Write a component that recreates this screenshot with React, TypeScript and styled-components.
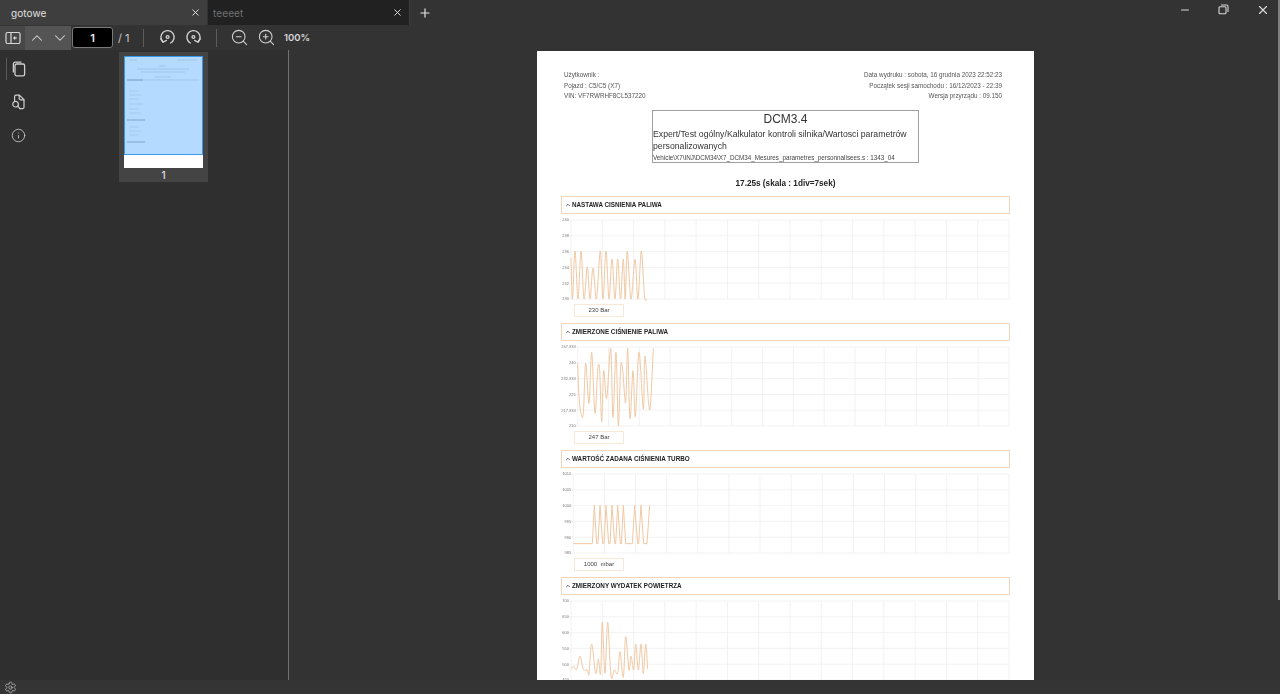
import React from "react"
import styled, { createGlobalStyle } from "styled-components"
import { ChevronDown, ChevronUp, Info, Minus, Plus, Settings, X, ZoomIn, ZoomOut } from "lucide-react"

const GlobalStyle = createGlobalStyle`
  html, body {
    margin: 0;
    padding: 0;
    background: #333333;
    overflow: hidden;
  }
  * {
    box-sizing: border-box;
  }
`

const Shell = styled.div`
  position: relative;
  width: 1280px;
  height: 694px;
  display: flex;
  flex-direction: column;
  background: #333333;
  color: #e4e4e4;
  font-family: Inter, "Liberation Sans", sans-serif;
  overflow: hidden;
`

const ScrollThumb = styled.div`
  position: absolute;
  top: 0;
  right: 0;
  width: 2px;
  height: 600px;
  background: #7e7e7e;
`

const TabBar = styled.div`
  height: 25px;
  display: flex;
  align-items: stretch;
  flex-shrink: 0;
`

const Tab = styled.div<{ $active?: boolean }>`
  width: ${(p) => (p.$active ? "207px" : "201px")};
  margin-right: ${(p) => (p.$active ? "1px" : "0")};
  padding: 0 6px 0 ${(p) => (p.$active ? "11px" : "5px")};
  display: flex;
  align-items: center;
  justify-content: space-between;
  background: ${(p) => (p.$active ? "#3e3e3e" : "#212121")};
  color: ${(p) => (p.$active ? "#e0e0e0" : "#707070")};
  font-size: 10px;
  letter-spacing: 0.1px;
`

const TabClose = styled(X)`
  width: 11px;
  height: 11px;
  color: #e8e8e8;
`

const NewTab = styled.div`
  width: 30px;
  display: flex;
  align-items: center;
  justify-content: center;
  border-left: 1px solid #3e3e3e;
  color: #e8e8e8;
`

const WindowControls = styled.div`
  margin-left: auto;
  margin-right: -2px;
  display: flex;
  align-items: center;
  height: 19px;
`

const WindowButton = styled.div`
  width: 39px;
  display: flex;
  justify-content: center;
  color: #d8d8d8;
`

const Toolbar = styled.div`
  height: 25px;
  display: flex;
  align-items: center;
  flex-shrink: 0;
  color: #d4d4d4;
`

const ToolSquare = styled.div<{ $tone?: string; $w?: number }>`
  width: ${(p) => p.$w ?? 23}px;
  height: 24px;
  display: flex;
  align-items: center;
  justify-content: center;
  background: ${(p) => p.$tone ?? "#545454"};
  color: #d8d8d8;
`

const PageInput = styled.div`
  width: 41px;
  height: 21px;
  margin-left: 1px;
  display: flex;
  align-items: center;
  justify-content: center;
  background: #000000;
  border: 1px solid #7a7a7a;
  border-radius: 3px;
  color: #ededed;
  font-size: 11px;
  font-weight: 600;
`

const PageTotal = styled.span`
  margin-left: 5px;
  width: 25px;
  font-size: 11px;
  color: #c8c8c8;
`

const Divider = styled.span`
  width: 1px;
  height: 18px;
  background: #5c5c5c;
`

const ToolGroup = styled.div<{ $left: number; $right: number; $gap: number }>`
  padding: 0 ${(p) => p.$right}px 0 ${(p) => p.$left}px;
  display: flex;
  align-items: center;
  gap: ${(p) => p.$gap}px;
  color: #d4d4d4;
`

const ZoomLabel = styled.span`
  font-size: 9.5px;
  font-weight: 600;
  color: #d8d8d8;
`

const Body = styled.div`
  flex: 1;
  min-height: 0;
  display: flex;
`

const Sidebar = styled.aside`
  width: 289px;
  flex-shrink: 0;
  display: flex;
  background: #2f2f2f;
  border-right: 1px solid #707070;
`

const Rail = styled.div`
  width: 37px;
  padding-top: 10px;
  display: flex;
  flex-direction: column;
  align-items: center;
  gap: 15px;
  color: #cfcfcf;
`

const RailButton = styled.div`
  position: relative;
  width: 37px;
  height: 18px;
  display: flex;
  align-items: center;
  justify-content: center;
`

const RailMark = styled.span`
  position: absolute;
  top: -2px;
  left: 6px;
  width: 1px;
  height: 22px;
  background: #5a5a5a;
`

const ThumbPane = styled.div`
  flex: 1;
  padding: 2px 80px 0 82px;
`

const ThumbCard = styled.div`
  height: 130px;
  padding: 4px 5px 0;
  display: flex;
  flex-direction: column;
  align-items: center;
  background: #444444;
`

const ThumbPage = styled.div`
  width: 79px;
  height: 112px;
  display: flex;
  flex-direction: column;
  background: #ffffff;
`

const ThumbSelection = styled.div`
  height: 99px;
  background: #b4dbff;
  border: 1.5px solid #3a98ea;
`

const ThumbNumber = styled.span`
  margin-top: 1px;
  font-size: 10px;
  font-weight: 500;
  line-height: 12px;
  color: #e0e0e0;
`

const Viewer = styled.main`
  flex: 1;
  min-width: 0;
  display: flex;
  justify-content: center;
  padding: 1px 0 0 2px;
  overflow: hidden;
  background: #333333;
`

const Sheet = styled.div`
  width: 497px;
  height: 760px;
  flex-shrink: 0;
  padding: 19px 24px 0;
  background: #ffffff;
  color: #2a2a2a;
  font-family: "Liberation Sans", Arial, sans-serif;
  filter: blur(0.3px);
`

const MetaRow = styled.div`
  display: flex;
  justify-content: space-between;
  padding: 0 8px 0 3px;
  font-size: 6.3px;
  line-height: 10.5px;
  color: #555555;
`

const MetaRight = styled.div`
  text-align: right;
`

const TitleBox = styled.div`
  width: 267px;
  height: 53px;
  margin: 8px auto 0;
  padding: 1px 0 0;
  border: 1px solid #a0a0a0;
  color: #333333;
`

const TitleMain = styled.div`
  font-size: 12px;
  line-height: 14px;
  text-align: center;
`

const TitlePath = styled.div`
  margin-top: 2px;
  font-size: 8.7px;
  line-height: 12px;
`

const TitleFile = styled.div`
  margin-top: 1px;
  font-size: 6.3px;
  line-height: 10px;
  white-space: nowrap;
  color: #444444;
`

const Duration = styled.div`
  margin: 15px 0 7px;
  font-size: 8.2px;
  font-weight: 700;
  line-height: 11px;
  text-align: center;
  color: #222222;
`

const Section = styled.section`
  margin-bottom: 6px;
`

const SectionHead = styled.div`
  height: 18px;
  padding-left: 3px;
  display: flex;
  align-items: center;
  gap: 1px;
  border: 1px solid #f0d6bd;
  font-size: 6.3px;
  font-weight: 700;
  color: #1e1e1e;
`

const Caret = styled(ChevronUp)`
  width: 6px;
  height: 6px;
  color: #333333;
`

const ChartSvg = styled.svg`
  display: block;
  margin-top: 4px;
`

const ValueBox = styled.div`
  width: 50px;
  height: 13px;
  margin: 2px 0 0 13px;
  display: flex;
  align-items: center;
  justify-content: center;
  border: 1px solid #f8e8d8;
  font-size: 6px;
  white-space: pre;
  color: #444444;
`

const Footer = styled.div`
  height: 14px;
  flex-shrink: 0;
  padding-left: 4px;
  display: flex;
  align-items: center;
  color: #c4c4c4;
  background: #343434;
`

type Pt = [number, number]

type Chart = {
  title: string
  value: string
  left: number
  labels: string[]
  points: Pt[]
  sharp?: boolean
}

// rows of the grid inside the 84px high chart
const ROWS = [2, 17.8, 33.6, 49.4, 65.2, 81]

// catmull-rom through the samples, the report draws soft curves
const toPath = (pts: Pt[], sharp?: boolean) => {
  if (sharp) return "M" + pts.map((p) => p.join(" ")).join("L")
  let d = `M${pts[0][0]} ${pts[0][1]}`
  for (let i = 0; i < pts.length - 1; i++) {
    const a = pts[Math.max(i - 1, 0)]
    const b = pts[i]
    const c = pts[i + 1]
    const e = pts[Math.min(i + 2, pts.length - 1)]
    const c1x = b[0] + (c[0] - a[0]) / 6
    const c1y = b[1] + (c[1] - a[1]) / 6
    const c2x = c[0] - (e[0] - b[0]) / 6
    const c2y = c[1] - (e[1] - b[1]) / 6
    d += `C${c1x} ${c1y} ${c2x} ${c2y} ${c[0]} ${c[1]}`
  }
  return d
}

const scaled = (pts: Pt[], dy: number): Pt[] => pts.map(([x, y]) => [x / 3 - 6, y / 3 - dy])

const charts: Chart[] = [
  {
    title: "NASTAWA CISNIENIA PALIWA",
    value: "230 Bar",
    left: 10,
    labels: ["240", "238", "236", "234", "232", "230"],
    points: [
      [10, 40], [11.5, 81], [14, 33], [17, 81], [20, 33], [23, 81], [26.3, 49], [29, 81], [32, 50], [35.5, 81],
      [39.3, 33], [42, 81], [45, 33], [48, 81], [51, 41], [54, 81], [56.7, 41], [59.5, 81], [62.3, 41], [64.2, 81],
      [66.3, 33], [70, 81], [74, 41], [77, 81], [80.3, 33], [83.5, 78], [86, 81],
    ],
  },
  {
    title: "ZMIERZONE CIŚNIENIE PALIWA",
    value: "247 Bar",
    left: 16.7,
    labels: ["247.333", "240", "232.333", "225", "217.333", "210"],
    points: scaled(
      [
        [68, 130], [72, 230], [78, 280], [85, 280], [92, 130], [102, 250], [110, 97], [120, 280],
        [128, 150], [134, 150], [140, 305], [146, 152], [155, 235], [167, 85], [174, 292], [183, 97],
        [190, 318], [197, 140], [203, 150], [212, 248], [218, 85], [225, 295], [234, 152], [241, 290],
        [252, 97], [265, 268], [270, 108], [284, 270], [295, 85],
      ],
      25,
    ),
  },
  {
    title: "WARTOŚĆ ZADANA CIŚNIENIA TURBO",
    value: "1000  mbar",
    left: 12.3,
    sharp: true,
    labels: ["1010", "1005", "1000", "995", "990", "985"],
    points: scaled(
      [
        [55, 296], [112, 296], [118, 181], [125, 296], [129, 296], [135, 181], [143, 296], [147, 296],
        [153, 181], [161, 296], [165, 296], [171, 181], [179, 296], [182, 296], [188, 181], [196, 296],
        [199, 296], [205, 181], [212, 296], [232, 296], [239, 181], [248, 296], [251, 296], [258, 181],
        [266, 296], [276, 296], [284, 181],
      ],
      27,
    ),
  },
  {
    title: "ZMIERZONY WYDATEK POWIETRZA",
    value: "",
    left: 10,
    labels: ["700", "650", "600", "550", "500", "450"],
    points: scaled(
      [
        [48, 298], [55, 288], [65, 298], [75, 258], [85, 298], [97, 300], [102, 312], [110, 222],
        [122, 310], [130, 268], [137, 310], [142, 157], [150, 310], [158, 157], [168, 318], [178, 300],
        [188, 310], [195, 245], [205, 322], [212, 200], [222, 300], [228, 258], [236, 300], [242, 222],
        [250, 300], [258, 222], [265, 310], [272, 222], [278, 298],
      ],
      29,
    ),
  },
]

const ChartPlot = ({ chart }: { chart: Chart }) => {
  const cols: number[] = []
  for (let x = chart.left; x <= 448.5; x += (448 - chart.left) / 14) cols.push(x)

  return (
    <ChartSvg width="449" height="84" viewBox="0 0 449 84">
      {ROWS.map((y) => (
        <line key={y} x1={chart.left - 2} x2="448" y1={y} y2={y} stroke="#efefef" strokeWidth="0.8" />
      ))}
      {cols.map((x) => (
        <line key={x} x1={x} x2={x} y1="2" y2="81" stroke="#efefef" strokeWidth="0.8" />
      ))}
      {chart.labels.map((label, i) => (
        <text key={label} x={chart.left - 2} y={ROWS[i] + 1.4} textAnchor="end" fontSize="4" fill="#777777">
          {label}
        </text>
      ))}
      <path d={toPath(chart.points, chart.sharp)} fill="none" stroke="#f1c8a2" strokeWidth="1" strokeLinejoin="round" />
    </ChartSvg>
  )
}

const RotateIcon = ({ flip }: { flip?: boolean }) => (
  <svg
    width="17"
    height="17"
    viewBox="0 0 17 17"
    fill="none"
    stroke="currentColor"
    strokeWidth="1.3"
    strokeLinecap="round"
    strokeLinejoin="round"
    style={flip ? { transform: "scaleX(-1)" } : undefined}
  >
    <path d="M4 13A6.6 6.6 0 1 1 11.6 14" />
    <path d="M1.8 9.8 4 13.2l3.4-1.8" />
    <circle cx="8.6" cy="8" r="1.4" />
  </svg>
)

const SidebarToggleIcon = () => (
  <svg width="16" height="14" viewBox="0 0 16 14" fill="none" stroke="currentColor" strokeWidth="1.2">
    <rect x="1" y="1.5" width="14" height="11" rx="1.5" />
    <path d="M6 1.5v11M12 7H9M10.2 5.6 8.8 7l1.4 1.4" />
  </svg>
)

const PagesIcon = () => (
  <svg width="14" height="16" viewBox="0 0 14 16" fill="none" stroke="currentColor" strokeWidth="1.3" strokeLinejoin="round">
    <rect x="3" y="3" width="9.6" height="11.8" rx="1.6" />
    <path d="M1.4 11.6V3a1.9 1.9 0 0 1 1.9-1.9H9.4" />
  </svg>
)

const SearchPagesIcon = () => (
  <svg width="15" height="16" viewBox="0 0 15 16" fill="none" stroke="currentColor" strokeWidth="1.2" strokeLinejoin="round" strokeLinecap="round">
    <path d="M3.6 6.4V2.6a1.4 1.4 0 0 1 1.4-1.4h3.4l4.6 4.4v7.6a1.4 1.4 0 0 1-1.4 1.4H8.6" />
    <path d="M8.2 1.4v3a1.4 1.4 0 0 0 1.4 1.4h3.2" />
    <circle cx="4.6" cy="10.2" r="2.8" />
    <path d="M6.8 12.2 9 14.6" />
  </svg>
)

const RestoreIcon = () => (
  <svg width="11" height="11" viewBox="0 0 11 11" fill="none" stroke="currentColor" strokeWidth="1.1">
    <rect x="1" y="2.8" width="7" height="7" rx="1" />
    <path d="M3 1h5.6A1.4 1.4 0 0 1 10 2.4V8" />
  </svg>
)

const ThumbMini = () => (
  <svg width="76" height="96" viewBox="0 0 76 96" stroke="#8fb0cf" strokeWidth="0.5">
    <path d="M4 3h8M52 3h20M34 9h6M12 12h52M16 15h44M30 20h16M2 23h72" />
    <path stroke="#6f8fb0" strokeWidth="0.7" d="M2 23h16M2 63h18M2 85h18" />
    <path strokeWidth="0.4" d="M4 34h10M4 38h12M4 42h10M4 47h14M4 52h10M4 56h12M4 70h10M4 74h12M4 78h10" />
  </svg>
)

const App = () => (
  <Shell>
    <GlobalStyle />
    <TabBar>
      <Tab $active>
        gotowe
        <TabClose />
      </Tab>
      <Tab>
        teeeet
        <TabClose />
      </Tab>
      <NewTab>
        <Plus size={14} />
      </NewTab>
      <WindowControls>
        <WindowButton>
          <Minus size={12} />
        </WindowButton>
        <WindowButton>
          <RestoreIcon />
        </WindowButton>
        <WindowButton>
          <X size={14} />
        </WindowButton>
      </WindowControls>
    </TabBar>

    <Toolbar>
      <ToolSquare $tone="#474747" $w={25}>
        <SidebarToggleIcon />
      </ToolSquare>
      <ToolSquare>
        <ChevronUp size={18} strokeWidth={1.4} />
      </ToolSquare>
      <ToolSquare>
        <ChevronDown size={18} strokeWidth={1.4} />
      </ToolSquare>
      <PageInput>1</PageInput>
      <PageTotal>/ 1</PageTotal>
      <Divider />
      <ToolGroup $left={14.5} $right={14.5} $gap={9}>
        <RotateIcon />
        <RotateIcon flip />
      </ToolGroup>
      <Divider />
      <ToolGroup $left={13} $right={8} $gap={8}>
        <ZoomOut size={19} strokeWidth={1.3} />
        <ZoomIn size={19} strokeWidth={1.3} />
      </ToolGroup>
      <ZoomLabel>100%</ZoomLabel>
    </Toolbar>

    <Body>
      <Sidebar>
        <Rail>
          <RailButton>
            <RailMark />
            <PagesIcon />
          </RailButton>
          <RailButton>
            <SearchPagesIcon />
          </RailButton>
          <RailButton>
            <Info size={15} strokeWidth={1.3} />
          </RailButton>
        </Rail>
        <ThumbPane>
          <ThumbCard>
            <ThumbPage>
              <ThumbSelection>
                <ThumbMini />
              </ThumbSelection>
            </ThumbPage>
            <ThumbNumber>1</ThumbNumber>
          </ThumbCard>
        </ThumbPane>
      </Sidebar>

      <Viewer>
        <Sheet>
          <MetaRow>
            <div>
              Użytkownik :
              <br />
              Pojazd : C5/C5 (X7)
              <br />
              VIN: VF7RWRHF8CL537220
            </div>
            <MetaRight>
              Data wydruku : sobota, 16 grudnia 2023 22:52:23
              <br />
              Początek sesji samochodu : 16/12/2023 - 22:39
              <br />
              Wersja przyrządu : 09.150
            </MetaRight>
          </MetaRow>
          <TitleBox>
            <TitleMain>DCM3.4</TitleMain>
            <TitlePath>Expert/Test ogólny/Kalkulator kontroli silnika/Wartosci parametrów personalizowanych</TitlePath>
            <TitleFile>Vehicle\X7\INJ\DCM34\X7_DCM34_Mesures_parametres_personnalisees.s : 1343_04</TitleFile>
          </TitleBox>
          <Duration>17.25s (skala : 1div=7sek)</Duration>
          {charts.map((chart) => (
            <Section key={chart.title}>
              <SectionHead>
                <Caret strokeWidth={3} />
                {chart.title}
              </SectionHead>
              <ChartPlot chart={chart} />
              <ValueBox>{chart.value}</ValueBox>
            </Section>
          ))}
        </Sheet>
      </Viewer>
    </Body>

    <Footer>
      <Settings size={13} strokeWidth={1.4} />
    </Footer>
    <ScrollThumb />
  </Shell>
)

export default App
